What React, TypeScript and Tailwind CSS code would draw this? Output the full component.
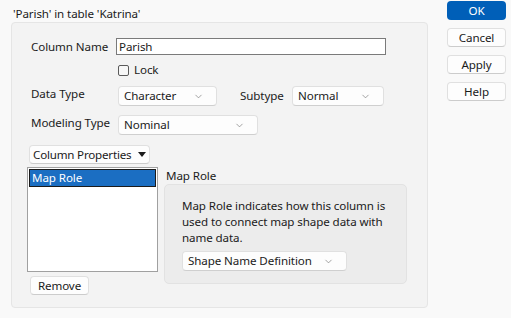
import { ChevronDown } from "lucide-react";

function Dropdown({ label, width }: { label: string; width: string }) {
  return (
    <div
      className={`${width} flex h-[20px] items-center justify-between rounded-[4px] border border-[#e0e0e0] border-b-[#cfcfcf] bg-[#fdfdfd] pl-[5px] pr-[12px]`}
    >
      <span className="whitespace-nowrap">{label}</span>
      <ChevronDown className="h-[11px] w-[11px] text-[#7a7a7a]" strokeWidth={1.5} />
    </div>
  );
}

function Button({ label, primary }: { label: string; primary?: boolean }) {
  return (
    <button
      type="button"
      className={
        primary
          ? "flex h-[19px] w-[59px] items-center justify-center rounded-[4px] bg-[#005fb8] text-white"
          : "flex h-[19px] w-[59px] items-center justify-center rounded-[4px] border border-[#e0e0e0] border-b-[#cccccc] bg-[#fdfdfd]"
      }
    >
      {label}
    </button>
  );
}

export default function App() {
  return (
    <div className="flex h-[318px] w-[511px] bg-[#f9f9f9] font-['Noto_Sans',sans-serif] text-[11.6px] leading-[16px] tracking-[-0.1px] text-[#1b1b1b]">
      <div className="ml-[11px] flex w-[417px] flex-col">
        <div className="h-[22px] pl-[2px] pt-[6px]">'Parish' in table 'Katrina'</div>

        <div className="flex h-[286px] flex-col rounded-[4px] border border-[#e5e5e5] bg-[#f3f3f3]">
          <div className="mt-[15px] flex h-[17px] items-center">
            <span className="ml-[19px] w-[85px]">Column Name</span>
            <div className="flex h-[17px] w-[270px] items-center border border-[#7a7a7a] bg-white pl-[2px]">
              Parish
            </div>
          </div>

          <div className="ml-[106px] mt-[9px] flex h-[12px] items-center gap-[5px]">
            <div className="h-[11px] w-[11px] rounded-[2px] border border-[#5a5a5a] bg-[#f7f7f7]" />
            <span>Lock</span>
          </div>

          <div className="mt-[10px] flex h-[20px] items-center">
            <span className="ml-[19px] w-[87px] self-start">Data Type</span>
            <Dropdown label="Character" width="w-[99px]" />
            <span className="ml-[23px] w-[52px]">Subtype</span>
            <Dropdown label="Normal" width="w-[92px]" />
          </div>

          <div className="mt-[9px] flex h-[20px] items-center">
            <span className="ml-[19px] w-[87px] self-start">Modeling Type</span>
            <Dropdown label="Nominal" width="w-[140px]" />
          </div>

          <div className="ml-[17px] mt-[10px] flex h-[19px] w-[121px] items-center rounded-[4px] border border-[#e0e0e0] border-b-[#cccccc] bg-[#fdfdfd] pl-[3px] pr-[3px] tracking-[-0.2px]">
            <span className="whitespace-nowrap">Column Properties</span>
            <svg width="8" height="5" viewBox="0 0 8 5" className="ml-auto shrink-0">
              <path d="M0 0h8L4 5z" fill="#1b1b1b" />
            </svg>
          </div>

          <div className="mt-[3px] flex">
            <div className="ml-[15px] flex w-[131px] flex-col">
              <div className="h-[105px] border border-[#a0a0a0] bg-white p-[1px]">
                <div className="flex h-[18px] items-center border border-[#1b1b1b] bg-[#1b6ec2] pl-[2px] text-white">
                  Map Role
                </div>
              </div>
              <div className="ml-[3px] mt-[4px]">
                <Button label="Remove" />
              </div>
            </div>

            <div className="ml-[6px] flex w-[243px] flex-col">
              <div className="h-[17px] pl-[2px] leading-[17px]">Map Role</div>
              <div className="h-[100px] rounded-[5px] border border-[#e2e2e2] bg-[#ececec] pl-[17px] pr-[10px] pt-[13px]">
                <p className="w-[212px]">
                  Map Role indicates how this column is used to connect map shape data with name data.
                </p>
                <div className="mt-[5px]">
                  <Dropdown label="Shape Name Definition" width="w-[165px]" />
                </div>
              </div>
            </div>
          </div>
        </div>
      </div>

      <div className="ml-[19px] flex flex-col gap-[8px] pt-[1px]">
        <Button label="OK" primary />
        <Button label="Cancel" />
        <Button label="Apply" />
        <Button label="Help" />
      </div>
    </div>
  );
}
